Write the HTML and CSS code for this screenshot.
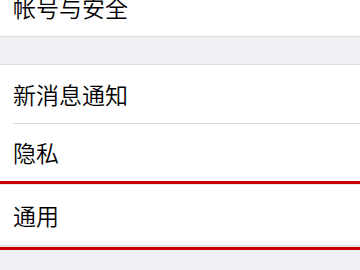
FILE: index.html
```html
<!DOCTYPE html>
<html lang="zh-CN">
<head>
<meta charset="utf-8">
<link rel="stylesheet" href="styles.css">
</head>
<body>
<div class="page">
  <div class="group group-top">
    <div class="row row-first"><span class="label">帐号与安全</span></div>
  </div>
  <div class="group group-main">
    <div class="row row-sep"><span class="label">新消息通知</span></div>
    <div class="row row-plain"><span class="label">隐私</span></div>
    <div class="selected">
      <div class="red-line"></div>
      <div class="hair"></div>
      <div class="row row-general"><span class="label">通用</span></div>
      <div class="hair hair-bottom"></div>
      <div class="red-line"></div>
    </div>
  </div>
</div>
</body>
</html>
```
FILE: styles.css
```css
html, body {
  margin: 0;
  padding: 0;
}
body {
  background: #efeff4;
  font-family: "Noto Sans CJK SC", "Noto Sans", sans-serif;
  overflow: hidden;
}
.page {
  width: 360px;
  height: 270px;
  overflow: hidden;
}
.group {
  background: #ffffff;
}
.group-top {
  margin-top: -22px;
  border-bottom: 1px solid #dcdce0;
  margin-bottom: 27px;
}
.group-main {
  border-top: 1px solid #dcdce0;
}
.row {
  display: flex;
  align-items: center;
  padding-left: 13px;
  box-sizing: border-box;
}
.row-first {
  height: 58px;
}
.row-sep {
  height: 59px;
  position: relative;
}
.row-sep::after {
  content: "";
  position: absolute;
  left: 13px;
  right: 0;
  bottom: 0;
  height: 1px;
  background: #dcdce0;
}
.row-plain {
  height: 57px;
}
.row-general {
  height: 60px;
}
.red-line {
  height: 3px;
  background: #c80000;
}
.hair {
  height: 1px;
  background: #e6e6ea;
}
.hair-bottom {
  height: 2px;
}
.label {
  font-size: 23px;
  font-weight: 350;
  color: #000000;
  line-height: 1;
}
```
